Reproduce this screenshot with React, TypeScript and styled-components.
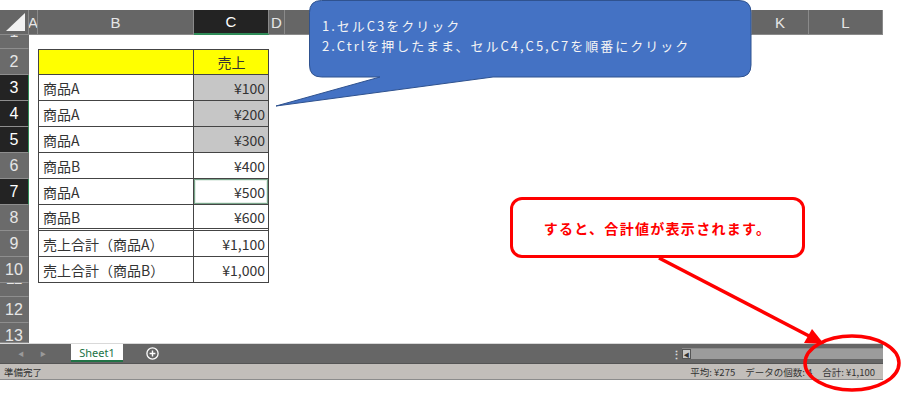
import React from 'react';
import styled, { createGlobalStyle } from 'styled-components';

const GlobalStyles = createGlobalStyle`
  html, body {
    margin: 0;
    padding: 0;
    background: #fff;
  }
  body {
    width: 902px;
    height: 393px;
    overflow: hidden;
    font-family: "Noto Sans CJK JP", "Noto Sans", sans-serif;
  }
`;

const Page = styled.div`
  position: relative;
  width: 902px;
  height: 393px;
  padding-top: 10px;
  box-sizing: border-box;
`;

const Window = styled.div`
  width: 883px;
  display: flex;
  flex-direction: column;
`;

const Grid = styled.div`
  display: grid;
  grid-template-columns: 29px 9px 156px 75px 16px 78px 78px 78px 78px 78px 77px 57px 74px;
  grid-template-rows: 25px 14px repeat(9, 26px) 14px 26px 20px;
  background: #fff;
`;

const Corner = styled.div`
  position: relative;
  background: #666;
  border-right: 1px solid #8a8a8a;
  border-bottom: 1px solid #8a8a8a;
  &::after {
    content: '';
    position: absolute;
    right: 3px;
    bottom: 3px;
    width: 19px;
    height: 18px;
    background: #f2f2f2;
    clip-path: polygon(100% 0, 100% 100%, 0 100%);
  }
`;

const ColHead = styled.div<{ $active?: boolean }>`
  display: flex;
  align-items: center;
  justify-content: center;
  overflow: hidden;
  background: ${p => (p.$active ? '#232323' : '#666')};
  color: ${p => (p.$active ? '#fff' : '#e6e6e6')};
  border-right: 1px solid #8a8a8a;
  border-bottom: ${p => (p.$active ? '2px solid #2e8b57' : '1px solid #8a8a8a')};
  box-sizing: border-box;
  font-family: "Liberation Sans", Arial, sans-serif;
  font-size: 15px;
`;

const RowHead = styled.div<{ $active?: boolean; $shift?: number }>`
  display: flex;
  align-items: center;
  justify-content: center;
  overflow: hidden;
  background: ${p => (p.$active ? '#232323' : '#6b6b6b')};
  color: ${p => (p.$active ? '#fff' : '#e6e6e6')};
  border-bottom: 1px solid #8e8e8e;
  border-right: ${p => (p.$active ? '1px solid #2e8b57' : '1px solid #6b6b6b')};
  box-sizing: border-box;
  font-family: "Liberation Sans", Arial, sans-serif;
  font-size: 16px;
  span {
    transform: translateY(${p => p.$shift || 0}px);
  }
`;

const Filler = styled.div<{ $from: number }>`
  grid-column: ${p => p.$from} / -1;
`;

const Cell = styled.div<{
  $right?: boolean;
  $center?: boolean;
  $bg?: string;
  $top?: boolean;
  $left?: boolean;
  $double?: boolean;
  $active?: boolean;
}>`
  display: flex;
  align-items: center;
  justify-content: ${p => (p.$center ? 'center' : p.$right ? 'flex-end' : 'flex-start')};
  padding: 0 3px 0 4px;
  box-sizing: border-box;
  background: ${p => p.$bg || '#fff'};
  color: #333;
  font-size: 14px;
  white-space: nowrap;
  border-right: 1px solid #444;
  border-left: ${p => (p.$left ? '1px solid #444' : 'none')};
  border-top: ${p => (p.$top ? '1px solid #444' : 'none')};
  border-bottom: ${p => (p.$double ? '3px double #444' : '1px solid #444')};
  box-shadow: ${p => (p.$active ? 'inset 0 0 0 1px #79a58a, inset 0 0 0 2px #e4efe8' : 'none')};
`;

const TabBar = styled.div`
  height: 20px;
  display: flex;
  align-items: stretch;
  background: #666;
  border-top: 1px solid #d9d9d9;
  box-sizing: border-box;
`;

const NavArrows = styled.div`
  width: 71px;
  display: flex;
  align-items: center;
  gap: 16px;
  padding-left: 18px;
  box-sizing: border-box;
  color: #9a9a9a;
  font-size: 6px;
`;

const Tab = styled.div`
  width: 52px;
  display: flex;
  align-items: center;
  justify-content: center;
  background: #fff;
  color: #217346;
  font-family: "Noto Sans", sans-serif;
  font-size: 11px;
  border-bottom: 2px solid #217346;
  margin-bottom: 1px;
  box-sizing: border-box;
`;

const AddButton = styled.div`
  margin-left: 23px;
  display: flex;
  align-items: center;
`;

const Spacer = styled.div`
  flex: 1;
`;

const Dots = styled.div`
  width: 12px;
  display: flex;
  align-items: center;
  justify-content: center;
  color: #ddd;
  font-size: 11px;
  font-weight: bold;
`;

const ScrollTrack = styled.div`
  width: 201px;
  margin: 4px 0;
  display: flex;
  background: #9c9c9c;
  border-top: 1px solid #8a8a8a;
`;

const ScrollArrow = styled.div`
  width: 9px;
  display: flex;
  align-items: center;
  justify-content: center;
  background: #c8c8c8;
  border: 1px solid #555;
  color: #333;
  font-size: 6px;
  box-sizing: border-box;
`;

const StatusBar = styled.div`
  height: 17px;
  display: flex;
  align-items: center;
  padding: 0 8px 0 4px;
  background: #c2beba;
  border-top: 1px solid #555;
  border-bottom: 1px solid #8c8c8c;
  box-sizing: border-box;
  color: #333;
  font-size: 9.5px;
`;

const StatusGroup = styled.div`
  display: flex;
  gap: 10px;
`;

const Overlay = styled.svg`
  position: absolute;
  left: 0;
  top: 0;
  pointer-events: none;
`;

const CalloutText = styled.div`
  position: absolute;
  left: 322px;
  top: 16px;
  color: #f4f4f4;
  font-size: 13px;
  line-height: 20px;
  letter-spacing: 2px;
  white-space: nowrap;
`;

const NoteBox = styled.div`
  position: absolute;
  left: 510px;
  top: 197px;
  width: 295px;
  height: 61px;
  display: flex;
  align-items: center;
  justify-content: center;
  border: 3px solid #ff0000;
  border-radius: 12px;
  background: #fff;
  box-sizing: border-box;
  color: #ff0000;
  font-size: 14px;
  font-weight: bold;
  letter-spacing: 1.3px;
`;

type Row = {
  n: number;
  b: string;
  c: string;
  head?: boolean;
  sel?: boolean;
  active?: boolean;
  double?: boolean;
};

const tableRows: Row[] = [
  { n: 2, b: '', c: '売上', head: true },
  { n: 3, b: '商品A', c: '¥100', sel: true },
  { n: 4, b: '商品A', c: '¥200', sel: true },
  { n: 5, b: '商品A', c: '¥300', sel: true },
  { n: 6, b: '商品B', c: '¥400' },
  { n: 7, b: '商品A', c: '¥500', active: true },
  { n: 8, b: '商品B', c: '¥600', double: true },
  { n: 9, b: '売上合計（商品A）', c: '¥1,100' },
  { n: 10, b: '売上合計（商品B）', c: '¥1,000' },
];

// E..J sit under the callout, so their letters never show
const columns = ['A', 'B', 'C', 'D', '', '', '', '', '', '', 'K', 'L'];

function App() {
  return (
    <>
      <GlobalStyles />
      <Page>
        <Window>
          <Grid>
            <Corner />
            {columns.map((c, i) => (
              <ColHead key={i} $active={c === 'C'}>
                {c}
              </ColHead>
            ))}

            <RowHead $shift={-10}>
              <span>1</span>
            </RowHead>
            <Filler $from={2} />

            {tableRows.map(r => (
              <React.Fragment key={r.n}>
                <RowHead $active={r.sel || r.active}>
                  <span>{r.n}</span>
                </RowHead>
                <div />
                <Cell $left $top={r.head} $double={r.double} $bg={r.head ? '#ffff00' : undefined}>
                  {r.b}
                </Cell>
                <Cell
                  $top={r.head}
                  $center={r.head}
                  $right={!r.head}
                  $double={r.double}
                  $active={r.active}
                  $bg={r.head ? '#ffff00' : r.sel ? '#c6c6c6' : undefined}
                >
                  {r.c}
                </Cell>
                <Filler $from={5} />
              </React.Fragment>
            ))}

            <RowHead $shift={-11}>
              <span>11</span>
            </RowHead>
            <Filler $from={2} />
            <RowHead>
              <span>12</span>
            </RowHead>
            <Filler $from={2} />
            <RowHead $shift={3}>
              <span>13</span>
            </RowHead>
            <Filler $from={2} />
          </Grid>

          <TabBar>
            <NavArrows>
              <span>◀</span>
              <span>▶</span>
            </NavArrows>
            <Tab>Sheet1</Tab>
            <AddButton>
              <svg width="13" height="13" viewBox="0 0 13 13">
                <circle cx="6.5" cy="6.5" r="5.6" fill="none" stroke="#fff" strokeWidth="1.3" />
                <path d="M6.5 3.6v5.8M3.6 6.5h5.8" stroke="#fff" strokeWidth="1.4" />
              </svg>
            </AddButton>
            <Spacer />
            <Dots>⋮</Dots>
            <ScrollTrack>
              <ScrollArrow>◀</ScrollArrow>
            </ScrollTrack>
          </TabBar>

          <StatusBar>
            <span>準備完了</span>
            <Spacer />
            <StatusGroup>
              <span>平均: ¥275</span>
              <span>データの個数: 4</span>
              <span>合計: ¥1,100</span>
            </StatusGroup>
          </StatusBar>
        </Window>

        <Overlay width="902" height="393" viewBox="0 0 902 393">
          <path
            d="M321.5 0.5 H739 Q751 0.5 751 12.5 V65 Q751 77 739 77 H493 L276 106 L380 77 H321.5 Q309.5 77 309.5 65 V12.5 Q309.5 0.5 321.5 0.5 Z"
            fill="#4472c4"
            stroke="#2f528f"
            strokeWidth="1"
          />
        </Overlay>
        <CalloutText>
          1.セルC3をクリック
          <br />
          2.Ctrlを押したまま、セルC4,C5,C7を順番にクリック
        </CalloutText>

        <NoteBox>すると、合計値が表示されます。</NoteBox>

        <Overlay width="902" height="393" viewBox="0 0 902 393">
          <line x1="659" y1="258" x2="811" y2="337" stroke="#ff0000" strokeWidth="3.5" />
          <polygon points="824,344 804,343 812,329" fill="#ff0000" />
          <ellipse cx="852" cy="363" rx="47" ry="27" fill="none" stroke="#ff0000" strokeWidth="3.5" />
        </Overlay>
      </Page>
    </>
  );
}

export default App;
